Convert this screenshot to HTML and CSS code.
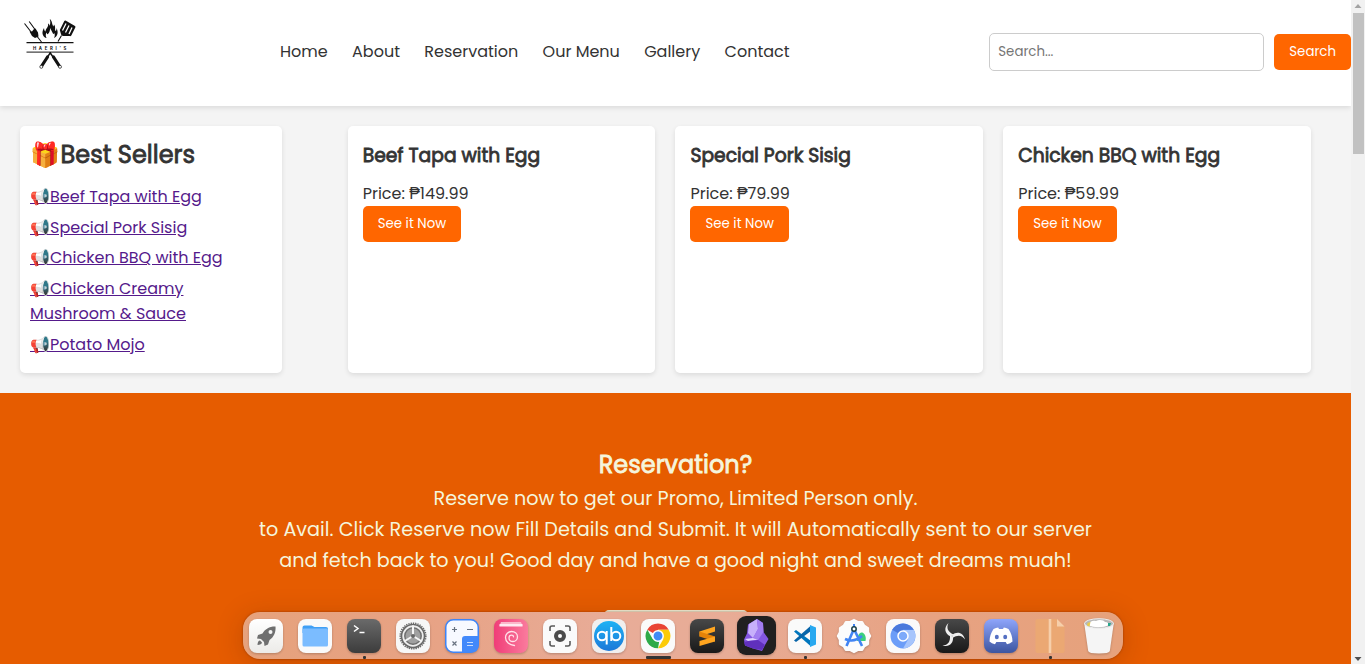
FILE: index.html
```
<!DOCTYPE html>
<html lang="en">
<head>
<meta charset="utf-8">
<title>Haeri's</title>
<link rel="stylesheet" href="styles.css">
</head>
<body>
<div class="window">
<div class="page">
  <header class="header">
    <svg class="logo" viewBox="20 14 60 60" fill="#111" stroke="#111">
      <g fill="none" stroke-width="1.1"><path d="M24.5 23.5l7 9M29.2 21.5l6.2 8.5M36 35l5.5 7M61.500 35.500l-3.500 6"/></g>
      <path stroke="none" d="M29.500 31.500l2.500 0 2-2.500 1.500-.5 2.500 4 .5 4-3.500 1.500-3-2z"/>
      <path stroke="none" d="M46 38c-4-2-4.500-6-2-10 .2 2 .5 3 1.500 3.500 0-3 3.500-4.500 2.500-8 1.500.5 1.500 2 1.500 2.500 1-2 1-4 .3-7 2.700 2 1.700 5 3.700 7.500l.5-2c2 2.500.5 4.500 1.500 6.500 1-.5 1-1.500 1-3 2 4 1.500 8-2.500 10 1.200-2 .8-3.500.3-5-.8 1.500-1.300 1-1.500.2-.8-2-1.800-2.500-2.300-5.200-1 2.500-.5 4-2.500 6-.7.700-1-.5-1.500-1.500-1 2-1 3.500 0 5.500z"/>
      <path stroke="none" d="M65.500 20.500l9.500 5.500q.8.500.3 1.500l-4 8q-.6.800-1.600.6l-6.700-.1q-2-.3-2.200-2.500l-1-3.500 4.500-9q.5-.8 1.200-.5z"/>
      <path fill="none" stroke="#fff" stroke-width="1.300" d="M66 23.500l-3.500 7M69 25.500l-3.500 7M72 27.500l-3 6.500"/>
      <path fill="none" stroke-width="1.200" d="M26.500 42.700H73.500"/><path fill="none" stroke="#444" stroke-width="1.200" d="M26.500 52.100H73.500"/>
      <text class="logo-name" x="51" y="49.800" text-anchor="middle" stroke="none">HAERI'S</text>
      <g fill="none" stroke-width="1.400"><path d="M50.500 52.500l-4 6M50 52.500l4 6"/></g>
      <g fill="none" stroke-width="3.200" stroke-linecap="round"><path d="M47.500 57l-5.500 8.500M53.500 57l5.500 8.500"/></g>
      <g fill="#fff" stroke-width=".7"><circle cx="41.300" cy="66.800" r="1.500"/><circle cx="60" cy="66.800" r="1.500"/></g>
    </svg>
    <nav class="nav"><a>Home</a><a>About</a><a>Reservation</a><a>Our Menu</a><a>Gallery</a><a>Contact</a></nav>
    <form class="search"><input class="search-input" type="text" placeholder="Search..."><button class="btn" type="button">Search</button></form>
  </header>

  <main class="main">
    <aside class="sellers">
      <h2 class="sellers-title"><span class="gift">🎁</span>Best Sellers</h2>
      <ul class="sellers-list">
        <li><a>📢Beef Tapa with Egg</a></li>
        <li><a>📢Special Pork Sisig</a></li>
        <li><a>📢Chicken BBQ with Egg</a></li>
        <li><a>📢Chicken Creamy Mushroom &amp; Sauce</a></li>
        <li><a>📢Potato Mojo</a></li>
      </ul>
    </aside>
    <section class="products">
      <article class="card"><h3>Beef Tapa with Egg</h3><p>Price: ₱149.99</p><button class="btn">See it Now</button></article>
      <article class="card"><h3>Special Pork Sisig</h3><p>Price: ₱79.99</p><button class="btn">See it Now</button></article>
      <article class="card"><h3>Chicken BBQ with Egg</h3><p>Price: ₱59.99</p><button class="btn">See it Now</button></article>
    </section>
  </main>

  <section class="reserve">
    <h2>Reservation?</h2>
    <p>Reserve now to get our Promo, Limited Person only.<br>to Avail. Click Reserve now Fill Details and Submit. It will Automatically sent to our server<br>and fetch back to you! Good day and have a good night and sweet dreams muah!</p>
    <div class="reserve-button"></div>
  </section>
</div>
<div class="scrollbar">
  <svg viewBox="0 0 14 13"><path fill="#a3a3a3" d="M7 4l3.500 4h-7z"/></svg>
  <div class="thumb"></div>
  <svg class="down" viewBox="0 0 14 13"><path fill="#505050" d="M7 10l3.500-4h-7z"/></svg>
</div>
</div>

<div class="dock">
  <svg class="app" viewBox="0 0 34 34"><defs>
    <linearGradient id="dark" x2="0" y2="1"><stop stop-color="#6a6a6a"/><stop offset="1" stop-color="#3c3c3c"/></linearGradient>
    <linearGradient id="black" x2="0" y2="1"><stop stop-color="#484848"/><stop offset="1" stop-color="#181818"/></linearGradient>
    <linearGradient id="pink"><stop stop-color="#f03d78"/><stop offset="1" stop-color="#fa7b9d"/></linearGradient>
    <linearGradient id="indigo" x2="0" y2="1"><stop stop-color="#8ea5fb"/><stop offset="1" stop-color="#3c55a0"/></linearGradient>
    <linearGradient id="sky" x2="0" y2="1"><stop stop-color="#1fb2f4"/><stop offset="1" stop-color="#1b78d8"/></linearGradient>
    <linearGradient id="paper" x2="0" y2="1"><stop stop-color="#fff"/><stop offset="1" stop-color="#ecebe8"/></linearGradient></defs>
    <rect width="34" height="34" rx="8" fill="url(#paper)"/><path fill="#6f6f6f" d="M26.500 7.500c-6-.2-10.500 2.500-13 7l-4.500 1.500-1 3.500 4 .5 3 3 .500 4 3.500-1.500 1.500-4.500c4.500-3 6.500-8 6-13.500zM11 21.500c-1.500 0-2.500 2-2.500 4.500 2.500 0 4.500-1 4.500-2.500z"/><circle cx="21.500" cy="13" r="2" fill="#f4f4f4"/></svg>
  <svg class="app" viewBox="0 0 34 34"><rect width="34" height="34" rx="8" fill="#fafafa"/><path fill="#3f9ff5" d="M4.500 8.500q0-2 2-2h7l3 1.500h11.500q2 0 2 2v4H4.500z"/><rect x="4.500" y="9.500" width="25.500" height="18" rx="1.500" fill="#7bbcff"/></svg>
  <div class="slot running"><svg class="app" viewBox="0 0 34 34"><rect width="34" height="34" rx="8" fill="url(#dark)"/><path fill="none" stroke="#fff" stroke-width="1.500" d="M7 6.500l4 3-4 3M12.500 13.500h5"/></svg></div>
  <svg class="app" viewBox="0 0 34 34"><rect width="34" height="34" rx="8" fill="#f7f7f7"/><circle cx="17" cy="17" r="12.800" fill="none" stroke="#686868" stroke-width="1.600" stroke-dasharray="1.300 1"/><circle cx="17" cy="17" r="11.500" fill="#eee" stroke="#686868" stroke-width="1.600"/><circle cx="17" cy="17" r="8.200" fill="#a0a0a0" stroke="#707070" stroke-width="1.500"/><path stroke="#f5f5f5" stroke-width="2" d="M17 17V6.500M17 17l-9 5.500M17 17l9 5.500"/><circle cx="17" cy="17" r="2" fill="#666"/></svg>
  <svg class="app" viewBox="0 0 34 34"><rect x=".75" y=".75" width="32.500" height="32.500" rx="7.500" fill="#f7f9ff" stroke="#3c84f7" stroke-width="1.500"/><path fill="#4289fb" d="M17 20q0-3 3-3h13.500v9q0 7.500-7.500 7.500h-9z"/><path stroke="#687280" stroke-width="1.200" d="M7 10.500h5M9.500 8v5M22 10.500h6M7.500 22.500l4 4M11.500 22.500l-4 4"/><path stroke="#c5dcff" stroke-width="1.200" d="M22 23.500h6M22 26.500h6"/></svg>
  <svg class="app" viewBox="0 0 34 34"><rect width="34" height="34" rx="8" fill="url(#pink)"/><path fill="#fbb8ca" d="M7 3h20l1.500 4h-23z"/><path fill="#ffeaf0" d="M5.500 5h23v2.500h-23z"/><path fill="none" stroke="#ffe1e9" stroke-width="1.300" stroke-linecap="round" d="M20.500 26.500c-5-.5-9-3.500-9-8 0-3.500 2.700-6 6-6 3.500 0 6 2.300 6 5.200 0 2.800-2 4.800-4.500 4.800-2.300 0-4-1.500-4-3.500 0-1.600 1.200-2.800 2.600-2.800 1.100 0 1.900.7 1.900 1.600"/></svg>
  <svg class="app" viewBox="0 0 34 34"><rect width="34" height="34" rx="8" fill="#fafafa"/><path fill="none" stroke="#5b5b5b" stroke-width="1.600" d="M7 12V9q0-2 2-2h3M22 7h3q2 0 2 2v3M27 22v3q0 2-2 2h-3M12 27H9q-2 0-2-2v-3"/><circle cx="17" cy="17" r="4" fill="#fff" stroke="#4b4b4b" stroke-width="4"/></svg>
  <svg class="app" viewBox="0 0 34 34"><rect width="34" height="34" rx="8" fill="#f1efee"/><circle cx="17" cy="17" r="15" fill="url(#sky)"/><g fill="none" stroke="#fff" stroke-width="2"><circle cx="10" cy="17" r="4.300"/><circle cx="24" cy="17" r="4.300"/><path d="M14.700 12v13.500M19.300 8V22"/></g></svg>
  <div class="slot active"><svg class="app" viewBox="0 0 34 34"><rect width="34" height="34" rx="8" fill="#fafafa"/><path fill="#e94435" d="M17 17L6.300 10.800A12.300 12.300 0 0 1 27.700 10.800H17z"/><path fill="#fccb08" d="M17 10.800h10.700A12.300 12.300 0 0 1 17 29.300l5.400-9.200z"/><path fill="#2eaa48" d="M6.300 10.800l5.400 9.300 6.500 2.500L17 29.300A12.300 12.300 0 0 1 6.300 10.800z"/><circle cx="17" cy="17" r="5.200" fill="#418bf5" stroke="#fff" stroke-width="1.500"/></svg></div>
  <svg class="app" viewBox="0 0 34 34"><rect width="34" height="34" rx="8" fill="url(#black)"/><path fill="#ffa51f" d="M9.500 12.500L25 7.500V12.500L9.500 17.500z"/><path fill="#e58208" d="M9.500 12.500l15.500 5v5l-15.500-5z"/><path fill="#ffa51f" d="M25 17.500v5l-15.500 4.500V22z"/></svg>
  <svg class="app app-large" viewBox="0 0 39 39"><rect width="39" height="39" rx="9" fill="#202020"/><path fill="#8456e2" d="M20 3l6 4 .5 9 5 7-3.500 6-3 6-9-2.500-8-3-1-6 3-6 1-9z"/><path fill="#c7b0fb" d="M20 3l-8 5-1 9 5 5 5-9z"/><path fill="#a27df0" d="M20 3l6 4 .5 9-5.500 8-5-2 5-9z"/><path fill="#e0d3ff" d="M8 23l8-1 5 2-10 1z"/><path fill="#6030bd" d="M7 26l4-1 10-1 7 5-3 5-9-1.500-8-3z"/></svg>
  <div class="slot running"><svg class="app" viewBox="0 0 34 34"><rect width="34" height="34" rx="8" fill="#fafafa"/><path fill="#0076bd" d="M6 12.500l2-1.500L23 22v5.500z"/><path fill="#0865a9" d="M6 21.500l2 1.500L23 12V6.500z"/><path fill="#29a9f0" d="M22 6l6 2.500v17L22 28z"/></svg></div>
  <svg class="app" viewBox="0 0 34 34"><path fill="#fcfcfc" stroke="#fcfcfc" stroke-width="2" stroke-linejoin="round" d="M17 .8l3.800 2.100 4.400.1 2.200 3.700 3.700 2.300.1 4.300L33.200 17l-2 3.800-.1 4.300-3.700 2.200-2.200 3.700-4.400.1-3.800 2.100-3.800-2.100-4.400-.1-2.200-3.700-3.700-2.200-.1-4.300L.8 17l2-3.700.1-4.300 3.700-2.300L8.800 3l4.400-.1z"/><path fill="#3bd07e" d="M20 22c0-5 2.500-9 5-8.500s4.500 4 3.500 8.500z"/><path fill="none" stroke="#4285f4" stroke-width="2.600" d="M16.500 11L9.500 27M17.500 11l7.500 16M8 20q9 4 17-3"/><path stroke="#4285f4" stroke-width="2" d="M17 5v5"/><circle cx="17" cy="10" r="2.200" fill="#fff" stroke="#173e46" stroke-width="1.500"/></svg>
  <svg class="app" viewBox="0 0 34 34"><rect width="34" height="34" rx="8" fill="#fafafa"/><circle cx="17" cy="17" r="12.500" fill="#6b9df8"/><path fill="#4a79dc" d="M17 17L6.200 10.800A12.500 12.500 0 0 1 27.800 10.800H17z"/><path fill="#a6c5fc" d="M17 11h10.800A12.500 12.500 0 0 1 17 29.500l5-9z"/><circle cx="17" cy="17" r="5" fill="#7daafa" stroke="#fff" stroke-width="1.500"/></svg>
  <svg class="app" viewBox="0 0 34 34"><rect width="34" height="34" rx="8" fill="url(#black)"/><g fill="#eee"><path id="blade" d="M16 17.500C9.500 15 8.500 8.500 13.500 4c-2.500 5-.5 9 5 11.500z"/><use href="#blade" transform="rotate(120 17 17)"/><use href="#blade" transform="rotate(240 17 17)"/></g></svg>
  <svg class="app" viewBox="0 0 34 34"><rect width="34" height="34" rx="8" fill="url(#indigo)"/><path fill="#fff" d="M9.500 10q2.500-1.200 4.700-1.400l.8 1.400h4l.8-1.400q2.200.2 4.700 1.400 4 6 4 12.500-2.200 2-5.500 2.800l-1.300-2.300h-9.400L11 25.300q-3.300-.8-5.500-2.800Q5.500 16 9.500 10z"/><ellipse cx="12.800" cy="18" rx="2" ry="2.300" fill="#5570c2"/><ellipse cx="21.200" cy="18" rx="2" ry="2.300" fill="#5570c2"/></svg>
  <div class="slot running"><svg class="app app-flat" viewBox="0 0 34 34"><path fill="#eba873" d="M2.500 2q0-2 2-2H24l7.500 7.500V32q0 2-2 2h-25q-2 0-2-2z"/><path fill="#f6cfab" d="M15.700 0h2.600v34h-2.600zM24 0l7.500 7.500H24z"/></svg></div>
  <svg class="app" viewBox="0 0 34 34"><path fill="#f5f5f5" d="M2.200 4h29.600l-4 28q-.5 2.500-10.800 2.500T6.200 32z"/><ellipse cx="17" cy="4.500" rx="14.500" ry="4.800" fill="#b8b8b8" stroke="#eee"/><path fill="#fff" d="M6 6c2-4 5-5 8-4 3-2 8-1 9 1 3 0 4 2 4 3-6 3-15 3-21 0z"/><path fill="#e8cc4c" d="M5.500 4l3-1-1 4.500-2.500-1z"/><path fill="#28a78e" d="M26 4l3 0-1 3-2 0z"/></svg>
</div>
</body>
</html>
```
FILE: styles.css
```
* { margin: 0; padding: 0; box-sizing: border-box; }
body { height: 664px; overflow: hidden; font-family: "Poppins", "Liberation Sans", sans-serif; font-size: 16px; line-height: 1.6; color: #333; background: #f4f4f4; }
.window { display: flex; height: 664px; overflow: hidden; }
.page { width: 1351px; height: 664px; overflow: hidden; }

.header { position: relative; display: flex; align-items: flex-start; height: 106px; background: #fff; box-shadow: 0 2px 5px rgba(0, 0, 0, .1); }
.logo { width: 60px; height: 60px; margin: 14px 200px 0 20px; }
.logo-name { font: 700 4.300px "Inter", sans-serif; letter-spacing: 2.700px; }
.nav { display: flex; gap: 24.350px; padding-top: 39px; }
.search { display: flex; align-items: center; gap: 10px; margin: 33px 0 0 auto; }
.search-input { width: 275px; height: 38px; padding: 8px; border: 1px solid #ccc; border-radius: 5px; font: 13.333px "Poppins", sans-serif; }
.search-input::placeholder { color: #757575; }
.btn { height: 36px; padding: 8px 15px; border: 0; border-radius: 5px; background: #f60; color: #fff; font: 13.333px/20px "Poppins", sans-serif; }

.main { display: flex; gap: 65.500px; padding: 20px 40px 20px 20px; height: 287px; }
.sellers { width: 262.200px; padding: 10px; border-radius: 5px; background: #fff; box-shadow: 0 2px 5px rgba(0, 0, 0, .1); }
.sellers-title, .card h3, .reserve h2 { font-weight: 400; -webkit-text-stroke: .8px currentColor; }
.sellers-title { font-size: 24px; line-height: 38.400px; margin: 0 0 9.700px; }
.gift { margin-right: .6px; }
.sellers-list { list-style: none; width: 215px; }
.sellers-list li { margin-bottom: 5px; }
.sellers-list a { color: #551a8b; text-decoration: underline; }
.products { flex: 1; display: grid; grid-template-columns: repeat(3, 1fr); gap: 20px; }
.card { padding: 15px; border-radius: 5px; background: #fff; box-shadow: 0 2px 5px rgba(0, 0, 0, .1); }
.card h3 { margin-bottom: 10px; font-size: 18.720px; line-height: 29.800px; }
.card p { line-height: 25.500px; }
.card .btn { display: block; }

.reserve { height: 400px; padding-top: 52.700px; background: #e65c00; color: beige; text-align: center; }
.reserve h2 { font-size: 24px; }
.reserve p { font-size: 19.200px; }
.reserve-button { width: 144px; height: 46px; margin: 34px auto 0; border-radius: 5px; background: beige; }

.scrollbar { display: flex; flex-direction: column; width: 14px; height: 664px; background: #f1f1f1; }
.scrollbar svg { width: 14px; height: 13px; }
.scrollbar .down { margin-top: auto; }
.thumb { width: 11px; height: 141px; margin-left: 2px; background: #c1c1c1; }

.dock { position: absolute; left: 243px; top: 612px; display: flex; align-items: flex-start; gap: 15px; width: 880px; height: 47px; padding: 6.500px 6.300px 0; border-radius: 17px; background: linear-gradient(90deg, #e6a27c, #e7a284 20%, #e8ac98 42%, #e8ac96 55%, #e7a282 78%, #e6a27c); box-shadow: 0 0 2px rgba(90, 30, 0, .6), 0 4px 26px rgba(90, 30, 0, .25); }
.app { display: block; flex: none; width: 34px; height: 34px; overflow: visible; filter: drop-shadow(0 1px 1px rgba(0, 0, 0, .22)); }
.app-large { width: 39px; height: 39px; margin: -2.500px; }
.app-flat { filter: none; }
.slot { display: flex; flex-direction: column; align-items: center; gap: 3px; width: 34px; }
.slot::after { content: ""; width: 3px; height: 3px; border-radius: 1px; background: #333; }
.active::after { width: 25px; }
```
